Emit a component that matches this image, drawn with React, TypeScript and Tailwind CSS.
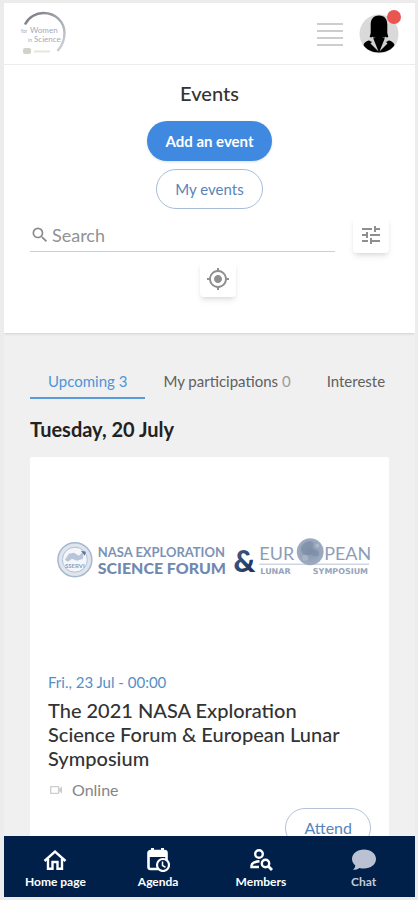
import React, { useState } from 'react';
import { MdMyLocation, MdOutlineVideocam, MdSearch, MdTune } from 'react-icons/md';

const tabs = [
  { id: 'upcoming', label: 'Upcoming', count: '3' },
  { id: 'participations', label: 'My participations', count: '0' },
  { id: 'interested', label: 'Intereste', count: '' },
];

function BrandLogo() {
  return (
    <svg viewBox="0 0 48 46" className="w-12 h-[46px]" role="img" aria-label="For Women in Science">
      <defs>
        <linearGradient id="ring" x1="0" y1="0" x2="1" y2="1">
          <stop offset="0" stopColor="#77777c" />
          <stop offset="0.55" stopColor="#a9abb5" />
          <stop offset="1" stopColor="#d4d5dc" />
        </linearGradient>
      </defs>
      <path d="M5 13.500C8.500 6 16 2 23.500 2C35.500 2 44.500 11 44.500 22C44.500 29 42 35 37.500 40" fill="none" stroke="url(#ring)" strokeWidth="2.400" />
      <g fontFamily="Lato, sans-serif" fill="#a4a9b8">
        <text x="1" y="22" fontSize="5">for</text>
        <text x="10" y="22" fontSize="8">Women</text>
        <text x="8" y="31" fontSize="5">in</text>
        <text x="14" y="31" fontSize="8">Science</text>
      </g>
      <rect x="3" y="37" width="8" height="6" rx="2" fill="#d2d1ca" />
      <path d="M14 40.500h16" stroke="#e7e5df" strokeWidth="2" />
    </svg>
  );
}

function Avatar() {
  return (
    <svg viewBox="0 0 40 40" className="w-10 h-10" aria-hidden="true">
      <circle cx="20" cy="20" r="19.500" fill="#d9d9d9" />
      <path d="M20 1.500c-6 0-8.300 4-8.300 9v8.500l-1 4c2 .8 4 .7 5.800 0h7c2 .7 4 .8 5.800 0l-1-4v-8.500c0-5-2.300-9-8.300-9z" fill="#000" />
      <path d="M4.500 31c1-3.500 5-4.500 8.500-5.800l3-2h8l3 2c3.500 1.300 7.500 2.300 8.500 5.800c-2 4-8.500 7.500-15.500 7.500s-13.500-3.500-15.500-7.500z" fill="#000" />
      <path d="M13.500 22.500l6 15l-8-8l1.500-1.500l-3-1.500zM26.500 22.500l-6 15l8-8l-1.500-1.500l3-1.500z" fill="#d0d0d0" />
      <path d="M16 22h8l-4 13z" fill="#000" />
    </svg>
  );
}

function SymposiumBanner() {
  return (
    <svg viewBox="0 0 360 204" className="block w-full" role="img" aria-label="NASA Exploration Science Forum and European Lunar Symposium">
      <defs>
        <linearGradient id="amp" x1="0" y1="0" x2="1" y2="1">
          <stop offset="0" stopColor="#4c6794" />
          <stop offset="1" stopColor="#16284f" />
        </linearGradient>
        <radialGradient id="moon">
          <stop offset="0" stopColor="#8696ae" />
          <stop offset="1" stopColor="#9facc0" />
        </radialGradient>
      </defs>
      {/* seal */}
      <circle cx="45" cy="103" r="17" fill="#dfe5ed" stroke="#a6b7ce" strokeWidth="1.500" />
      <circle cx="45" cy="103" r="12.500" fill="#f4f6f9" stroke="#b1c0d4" />
      <path d="M35 103l4-6l5-1l5 3l5-5l-1 8l-6 2l-5-2l-4 3z" fill="#b7c5d8" />
      <path d="M51 94l5 1l-1 4z" fill="#5d7699" />
      <text x="45" y="111" textAnchor="middle" fontFamily="Lato, sans-serif" fontSize="6" fontWeight="700" fill="#8da1bf">SSERVI</text>
      <g fontFamily="Lato, sans-serif">
        <text x="68" y="100" fontSize="13" fontWeight="700" fill="#7d93b5">NASA EXPLORATION</text>
        <text x="68" y="117" fontSize="16" fontWeight="900" fill="#7089b0">SCIENCE FORUM</text>
        <text x="204" y="115" fontSize="30" fontWeight="900" fill="url(#amp)">&amp;</text>
      </g>
      <g fontFamily="Lato, sans-serif" fontSize="18" fill="#8c9db9">
        <text x="230" y="103">EUR</text>
        <text x="295" y="103">PEAN</text>
      </g>
      <path d="M230 107.500h110" stroke="#b6c2d3" />
      <circle cx="281" cy="95" r="13.500" fill="url(#moon)" />
      <path d="M272 90c3-5 8-7 11-5s-1 5 1 7s6 1 6 5s-5 3-7 1s-5 2-8 0s-4-5-3-8z" fill="#71839e" opacity="0.500" />
      <circle cx="276" cy="101" r="3" fill="#b4bfce" opacity="0.600" />
      <circle cx="288" cy="89" r="2" fill="#bcc7d5" opacity="0.600" />
      <g fontFamily="DejaVu Sans, sans-serif" fontSize="8" fontWeight="700" fill="#94a4bb">
        <text x="231" y="117">LUNAR</text>
        <text x="339" y="117" textAnchor="end">SYMPOSIUM</text>
      </g>
    </svg>
  );
}

function HomeIcon() {
  return (
    <svg viewBox="0 0 24 24" className="w-6 h-6" fill="none" stroke="#fff" strokeWidth="2.400" aria-hidden="true">
      <path d="M1.500 13L12 3.500L22.500 13" />
      <path d="M5 11v9.800h4.500V14h5v6.800H19V11" />
    </svg>
  );
}

function AgendaIcon() {
  return (
    <svg viewBox="0 0 24 24" className="w-6 h-6" fill="none" aria-hidden="true">
      <path d="M12 21H4.500a2 2 0 0 1-2-2V5a2 2 0 0 1 2-2h14a2 2 0 0 1 2 2v7" stroke="#fff" strokeWidth="2.600" />
      <path d="M2 4h19v5H2zM5 0h3v4H5zM15 0h3v4h-3z" fill="#fff" />
      <circle cx="17" cy="17" r="6" stroke="#fff" strokeWidth="2.200" fill="#00204a" />
      <path d="M16.500 13.500v4l3 1.800" stroke="#fff" strokeWidth="1.500" />
    </svg>
  );
}

function MembersIcon() {
  return (
    <svg viewBox="0 0 24 24" className="w-6 h-6" fill="none" stroke="#fff" strokeWidth="2.400" aria-hidden="true">
      <circle cx="10" cy="6" r="3.800" />
      <path d="M10.500 13.200C6 13.400 2.500 15.400 2.500 17.500V19H10" />
      <circle cx="16.500" cy="15.500" r="3.700" />
      <path d="M19 18l4 4" strokeWidth="2.800" />
    </svg>
  );
}

function ChatIcon() {
  return (
    <svg viewBox="0 0 24 24" className="w-6 h-6" aria-hidden="true">
      <path d="M12 1.500c6.600 0 12 4 12 9.500s-5.400 9.500-12 9.500c-1.600 0-3.100-.2-4.500-.6c-1.800 1.400-4.200 2-6.500 1.900c1.500-1.300 2.300-2.900 2.300-4.300C1.200 15.800 0 13.500 0 11C0 5.500 5.400 1.500 12 1.500z" fill="#b9c1d3" />
    </svg>
  );
}

const navItems = [
  { label: 'Home page', icon: <HomeIcon />, color: 'text-white' },
  { label: 'Agenda', icon: <AgendaIcon />, color: 'text-white' },
  { label: 'Members', icon: <MembersIcon />, color: 'text-white' },
  { label: 'Chat', icon: <ChatIcon />, color: 'text-[#c3cbdb]' },
];

export default function App() {
  const [activeTab, setActiveTab] = useState('upcoming');
  const [query, setQuery] = useState('');

  return (
    <div className="h-screen flex flex-col bg-[#ececec] pt-[3px] pb-[3px] pl-1 pr-[3px] font-[Lato,sans-serif] text-[#333]">
      <header className="flex shrink-0 items-center justify-between h-[62px] bg-white border-b border-[#ececec] px-4">
        <a href="#home">
          <BrandLogo />
        </a>
        <div className="flex items-center gap-4">
          <button type="button" aria-label="Menu">
            <svg viewBox="0 0 26 26" className="w-[26px] h-[26px]" stroke="#bdbdbd" strokeWidth="1.500" aria-hidden="true">
              <path d="M0 3h26M0 10h26M0 17h26M0 24h26" />
            </svg>
          </button>
          <button type="button" aria-label="Profile" className="relative">
            <Avatar />
            <span className="absolute -top-1 -right-0.5 w-3.5 h-3.5 rounded-full bg-[#ea5550]" />
          </button>
        </div>
      </header>

      <main className="flex-1 min-h-0 overflow-hidden bg-[#f0f0f0]">
        <section className="flex flex-col items-center bg-white shadow-sm px-[26px] pt-3.5 pb-9">
          <h1 className="text-xl leading-7 font-medium">Events</h1>
          <button type="button" className="mt-3.5 h-10 px-[18px] rounded-full bg-[#3f8ae0] text-white text-[15px] font-bold shadow">
            Add an event
          </button>
          <button type="button" className="mt-2 h-10 px-[18px] rounded-full border border-[#a9bdd8] bg-white text-[15px] text-[#5b83b8]">
            My events
          </button>

          <div className="mt-2 flex w-full items-center gap-[18px]">
            <label className="flex flex-1 min-w-0 items-center gap-0.5 h-[34px] border-b border-[#cfcfcf]">
              <MdSearch className="w-5 h-5 shrink-0 text-[#8a8a8a]" />
              <input
                type="text"
                aria-label="Search"
                placeholder="Search"
                value={query}
                onChange={(e) => setQuery(e.target.value)}
                className="w-full min-w-0 bg-transparent text-lg outline-none placeholder:text-[#929292]"
              />
            </label>
            <button type="button" aria-label="Filters" className="flex items-center justify-center w-9 h-9 rounded bg-white shadow-md text-[#8f8f8f]">
              <MdTune className="w-6 h-6" />
            </button>
          </div>
          <button type="button" aria-label="Near me" className="mt-2 ml-4 flex items-center justify-center w-9 h-9 rounded bg-white shadow-md text-[#8f8f8f]">
            <MdMyLocation className="w-6 h-6" />
          </button>
        </section>

        <div className="px-[26px] pt-8">
          <div role="tablist" className="flex overflow-hidden whitespace-nowrap">
            {tabs.map((tab) => (
              <button
                key={tab.id}
                type="button"
                role="tab"
                aria-selected={activeTab === tab.id}
                onClick={() => setActiveTab(tab.id)}
                className={`shrink-0 h-[34px] pl-[18px] text-[15px] border-b-2 ${
                  tab.count ? 'pr-[18px]' : ''
                } ${activeTab === tab.id ? 'border-[#5b9bdb] text-[#4f94d6]' : 'border-transparent text-[#606060]'}`}
              >
                {tab.label}
                {tab.count && (
                  <span className={activeTab === tab.id ? '' : 'text-[#9a9a9a]'}> {tab.count}</span>
                )}
              </button>
            ))}
          </div>

          <h2 className="mt-4 text-xl leading-7 font-bold text-[#222]">Tuesday, 20 July</h2>

          <article className="mt-3.5 bg-white rounded-xs">
            <SymposiumBanner />
            <div className="px-[18px] pt-2.5 pb-5">
              <p className="text-[15px] leading-6 text-[#5590c6]">Fri., 23 Jul - 00:00</p>
              <h3 className="mt-1 pr-6 text-xl leading-6 font-medium">
                The 2021 NASA Exploration Science Forum &amp; European Lunar Symposium
              </h3>
              <p className="mt-2 flex items-center gap-2 text-base leading-6 text-[#858585]">
                <MdOutlineVideocam className="w-4 h-4 text-[#cdcdcd]" />
                Online
              </p>
              <div className="mt-1.5 flex justify-end">
                <button type="button" className="h-10 px-[18px] rounded-full border border-[#b3c2d6] text-base text-[#5685bd]">
                  Attend
                </button>
              </div>
            </div>
          </article>
        </div>
      </main>

      <nav className="flex shrink-0 items-center h-[61px] pt-1 bg-[#00204a]">
        {navItems.map((item) => (
          <a key={item.label} href="#nav" className={`flex flex-1 flex-col items-center gap-0.5 text-xs leading-4 font-bold ${item.color}`}>
            {item.icon}
            {item.label}
          </a>
        ))}
      </nav>
    </div>
  );
}
